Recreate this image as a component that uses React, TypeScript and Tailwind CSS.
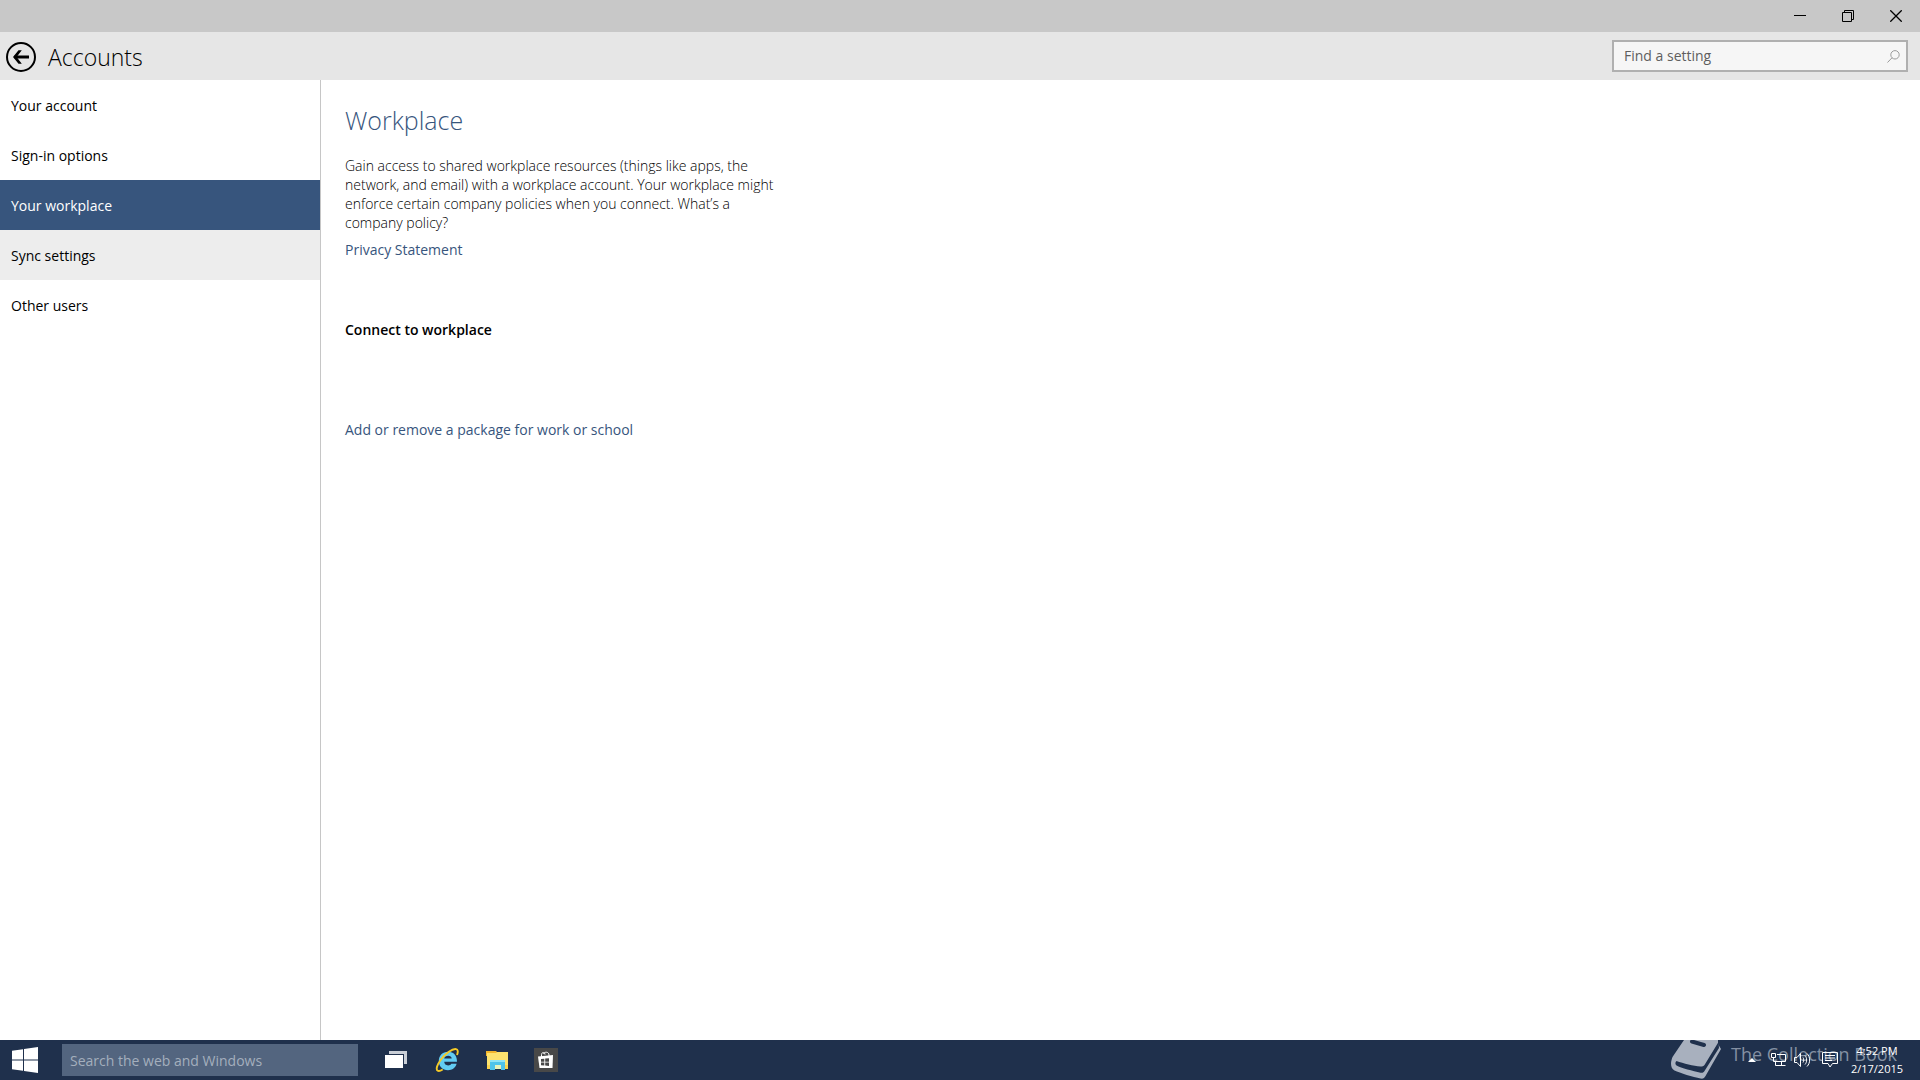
import React from "react";

const navItems = [
  { label: "Your account", tone: "text-black hover:bg-[#ededed]" },
  { label: "Sign-in options", tone: "text-black hover:bg-[#ededed]" },
  { label: "Your workplace", tone: "bg-[#37557d] text-white", current: true },
  { label: "Sync settings", tone: "bg-[#ededed] text-black" },
  { label: "Other users", tone: "text-black hover:bg-[#ededed]" },
];

function TitleBar() {
  return (
    <div className="flex h-8 shrink-0 justify-end bg-[#c8c8c8] text-black">
      <button aria-label="Minimize" className="flex h-8 w-12 items-center justify-center">
        <svg width="12" height="12" viewBox="0 0 12 12" shapeRendering="crispEdges">
          <path d="M0 5h12v1H0z" fill="currentColor" />
        </svg>
      </button>
      <button aria-label="Restore" className="flex h-8 w-12 items-center justify-center">
        <svg width="12" height="12" viewBox="0 0 12 12" fill="none" stroke="currentColor">
          <path d="M.5 2.5h9v9h-9zM2.5 2.5v-2h9v9h-2" />
        </svg>
      </button>
      <button aria-label="Close" className="flex h-8 w-12 items-center justify-center">
        <svg width="12" height="12" viewBox="0 0 12 12" fill="none" stroke="currentColor" strokeWidth="1.3">
          <path d="M.3.3l11.4 11.4M11.7.3L.3 11.7" />
        </svg>
      </button>
    </div>
  );
}

function Header() {
  return (
    <header className="flex h-12 shrink-0 items-center justify-between bg-[#e6e6e6] pr-3 pl-1.5">
      <div className="flex items-center gap-3 pt-0.5">
        <button aria-label="Back">
          <svg width="30" height="30" viewBox="0 0 30 30" fill="none" stroke="#000">
            <circle cx="15" cy="15" r="14" strokeWidth="2" />
            <path d="M8.5 15H23" strokeWidth="3" />
            <path d="M15.8 8.2h-3.3L7 15l5.500 6.800h3.300L10.600 15z" fill="#000" stroke="none" />
          </svg>
        </button>
        <h1 className="text-[23px] leading-8 font-light text-black">Accounts</h1>
      </div>
      <form role="search" className="flex h-8 w-74 items-center border-2 border-[#b0b0b0] bg-[#f6f6f6] pr-1.5">
        <input
          aria-label="Find a setting"
          placeholder="Find a setting"
          className="min-w-0 flex-1 bg-transparent pl-2.5 text-[14px] leading-6 outline-none placeholder:text-[#5e5e5e]"
        />
        <svg width="13" height="13" viewBox="0 0 13 13" fill="none" stroke="#9a9a9a">
          <circle cx="8" cy="4.800" r="4.200" />
          <path d="M5 7.800L.5 12.500" />
        </svg>
      </form>
    </header>
  );
}

function Sidebar() {
  return (
    <nav aria-label="Accounts" className="w-[321px] shrink-0 border-r border-[#c6c6c6]">
      <ul>
        {navItems.map((item) => (
          <li key={item.label}>
            <a
              href="#"
              aria-current={item.current ? "page" : undefined}
              className={`flex h-[50px] items-center pt-0.5 pl-[11px] text-[14px] leading-5 ${item.tone}`}
            >
              {item.label}
            </a>
          </li>
        ))}
      </ul>
    </nav>
  );
}

function Workplace() {
  return (
    <main className="flex-1 px-6 pt-5 text-[14px] leading-5 text-black">
      <h2 className="text-[25px] leading-10 font-light text-[#37557d]">Workplace</h2>
      <p className="mt-4 leading-[19px] font-light">
        Gain access to shared workplace resources (things like apps, the
        <br />
        network, and email) with a workplace account. Your workplace might
        <br />
        enforce certain company policies when you connect. What’s a
        <br />
        company policy?
      </p>
      <a href="#" className="mt-2 block w-fit text-[#37557d]">Privacy Statement</a>
      <h3 className="mt-15 font-semibold">Connect to workplace</h3>
      <a href="#" className="mt-20 block w-fit text-[#37557d]">Add or remove a package for work or school</a>
    </main>
  );
}

function TaskbarApps() {
  return (
    <div className="ml-[13px] flex items-center">
      <button aria-label="Task view" className="flex h-10 w-[50px] items-center justify-center">
        <svg width="22" height="18" viewBox="0 0 22 18">
          <path d="M4 0h18v13H4z" fill="#c9ced6" />
          <path d="M0 3h19v14H0z" fill="#1f304c" />
          <path d="M0 4h18v13H0z" fill="#fff" />
        </svg>
      </button>
      <button aria-label="Internet Explorer" className="flex h-10 w-[52px] items-center justify-center">
        <svg width="24" height="24" viewBox="0 0 24 24" fill="none">
          <path
            d="M22 13.800H9.200c.2 2.300 1.600 3.600 3.900 3.600 1.600 0 2.700-.6 3.200-1.600h5.300c-1.100 3.900-4.300 6.400-8.600 6.400-5.600 0-9.200-3.800-9.200-9.200 0-5.500 3.700-9.300 9.300-9.300 5.700 0 9.100 3.900 8.900 10.100zM16.700 10.400c-.2-1.700-1.500-2.700-3.500-2.700s-3.600 1-4 2.700z"
            fill="#62ccf3"
          />
          <path
            d="M22 7c1.300-3.300.9-5.500-1-5.900C17.500.4 10.500 5.500 6 11.500c-4 5.300-5.400 10-3.300 11.200 1.200.7 3 .1 5-1.200"
            stroke="#f5ca27"
            strokeWidth="1.900"
          />
        </svg>
      </button>
      <button aria-label="File Explorer" className="flex h-10 w-12 items-center justify-center">
        <svg width="22" height="20" viewBox="0 0 22 20">
          <path d="M0 1h10l2 2v3H0z" fill="#f3b62c" />
          <path d="M1 3h9l1-1h11v17H1z" fill="#fde36f" />
          <path d="M1 15h21v4H1z" fill="#fbd34f" />
          <path d="M4 10h15v10h-4v-5H9v5H4z" fill="#4fc4ea" />
          <path d="M4 10h15v2H4z" fill="#8fe4f5" />
          <path d="M9 15h6v4H9z" fill="#e8f3ba" />
        </svg>
      </button>
      <button aria-label="Store" className="flex h-10 w-[50px] items-center justify-center">
        <svg width="24" height="24" viewBox="0 0 24 24">
          <path d="M0 0h24v24H0z" fill="#484848" />
          <path d="M7.500 9V6.500C7.500 4 11 4 11 6.500M9.500 6c.8-2.500 5.500-2.500 5.500 1v2" fill="none" stroke="#fff" />
          <path d="M4 8.500L19 7l-.500 13H5.500z" fill="#fff" />
          <path d="M7 11l3.300-.3v3H7zM11.200 10.600l3.800-.4v3.500h-3.800zM7 14.500h3.300v3L7 17.200zM11.200 14.500H15V18l-3.800-.4z" fill="#484848" />
        </svg>
      </button>
    </div>
  );
}

function Watermark() {
  return (
    <div className="pointer-events-none absolute top-0 right-[23px] flex h-10 items-start gap-2.5 text-[#8490a3]">
      <svg width="50" height="39" viewBox="0 0 50 39">
        <path
          d="M13 0h34v4l3 5-15.500 27c-1 2-2.500 3-5 2.500C22 37 9 33 3.500 30.500-1 28-.5 22 1.500 17z"
          fill="#a8b0be"
        />
        <path d="M5.500 21c7 2.500 17 5 24 5.500 2 0 3-.3 4-1.500L47.500 2l.5 6-14.500 23c-.8 1.500-2 2.200-4 1.700C22 31 10 28 5.500 25.500c-1.500-1-1.500-3.500 0-4.500z" fill="#1f304c" />
        <path d="M21 1.500l12 3.500" stroke="#1f304c" strokeWidth="4" strokeLinecap="round" />
      </svg>
      <span className="mt-0.5 text-[18px] leading-6 whitespace-nowrap">The Collection Book</span>
    </div>
  );
}

function Tray() {
  return (
    <div className="relative mr-3.5 flex h-10 items-center">
      <button aria-label="Show hidden icons" className="flex w-6 justify-center">
        <svg width="8" height="4" viewBox="0 0 8 4"><path d="M0 4l4-4 4 4z" fill="#fff" /></svg>
      </button>
      <button aria-label="Network" className="flex w-7 justify-center">
        <svg width="15" height="14" viewBox="0 0 15 14" fill="none" stroke="#fff">
          <path d="M6 1.500h8.500v7H5M6.500 12.500h8M10.500 8.500v4" />
          <path d="M.5.5h4v4h-4zM2.500 4.500v4H5M4.500 9v3.500H7" />
        </svg>
      </button>
      <button aria-label="Volume" className="flex w-5 justify-center">
        <svg width="17" height="14" viewBox="0 0 17 14" fill="none" stroke="#fff">
          <path d="M.5 4.500H3l3.500-4v13l-3.500-4H.5zM9 4.500c1 1.500 1 3.500 0 5M11 2.500c2.200 2.500 2.200 6.500 0 9M13 .5c3.500 3.500 3.500 9.500 0 13" />
        </svg>
      </button>
      <button aria-label="Notifications" className="flex w-9 justify-center">
        <svg width="16" height="16" viewBox="0 0 16 16" fill="none" stroke="#fff">
          <path d="M.5.5h15v11h-5L8 15l-2-3.500H.5zM3 3.500h10M3 6h10M3 8.500h7" />
        </svg>
      </button>
      <button className="flex w-[58px] flex-col items-center text-[11px] leading-[18px] text-white">
        <span>4:52 PM</span>
        <span>2/17/2015</span>
      </button>
    </div>
  );
}

function Taskbar() {
  return (
    <footer className="relative flex h-10 shrink-0 items-center justify-between bg-[#1f304c]">
      <div className="flex items-center">
        <button aria-label="Start" className="flex h-10 w-[62px] items-center pl-3">
          <svg width="26" height="26" viewBox="0 0 26 26" fill="#fff">
            <path d="M0 3.700L11 2.200V12.500H0zM12 2L26 0v12.500H12zM0 13.500h11v10.200L0 22.200zM12 13.500h14V26l-14-2.100z" />
          </svg>
        </button>
        <input
          aria-label="Search the web and Windows"
          placeholder="Search the web and Windows"
          className="h-8 w-74 bg-[#53657f] px-2 text-[14px] text-white outline-none placeholder:text-[#a4afbd]"
        />
        <TaskbarApps />
      </div>
      <Watermark />
      <Tray />
    </footer>
  );
}

export default function App() {
  return (
    <div className="flex min-h-screen flex-col bg-white font-['Open_Sans','Noto_Sans',sans-serif]">
      <TitleBar />
      <Header />
      <div className="flex flex-1">
        <Sidebar />
        <Workplace />
      </div>
      <Taskbar />
    </div>
  );
}
